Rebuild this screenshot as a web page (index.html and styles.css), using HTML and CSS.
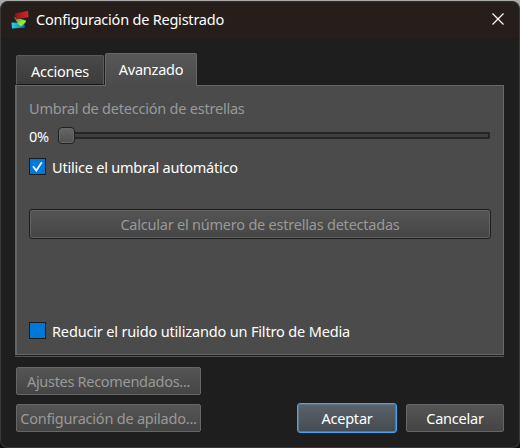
FILE: index.html
```html
<!DOCTYPE html>
<html lang="es">
<head>
<meta charset="utf-8">
<title>Configuración de Registrado</title>
<link rel="stylesheet" href="styles.css">
</head>
<body>
<main class="dialog">
  <header class="titlebar">
    <svg class="logo" width="18" height="20" viewBox="0 0 18 20">
      <defs>
        <linearGradient id="red"><stop offset="0" stop-color="#8c1719"/><stop offset="1" stop-color="#d82629"/></linearGradient>
        <linearGradient id="blue"><stop offset="0" stop-color="#27d5f2"/><stop offset="1" stop-color="#1165b8"/></linearGradient>
        <linearGradient id="green" x2="1" y2="1"><stop offset="0" stop-color="#246e20"/><stop offset=".6" stop-color="#8bea43"/></linearGradient>
      </defs>
      <path d="M.5 12.5 13 13 14 17.5 1 18.5Z" fill="url(#blue)"/>
      <path d="M2.5 6.5 8 8.5 15 10.5 14.5 12.5 10 16.5 7.5 14.5Z" fill="url(#green)"/>
      <path d="M4 3.5 17 .8 17.5 7.3 5 9.3Z" fill="url(#red)"/>
    </svg>
    <h1 class="title">Configuración de Registrado</h1>
    <svg class="close" width="12" height="12" viewBox="0 0 12 12"><path d="M.5.5l11 11M11.5.5l-11 11"/></svg>
  </header>
  <nav class="tabs">
    <div class="tab">Acciones</div>
    <div class="tab active">Avanzado</div>
  </nav>
  <section class="panel">
    <div class="caption">Umbral de detección de estrellas</div>
    <div class="slider-row">
      <span class="value">0%</span>
      <div class="slider"><i class="handle"></i><i class="groove"></i></div>
    </div>
    <div class="check-row">
      <span class="box"><svg width="15" height="15" viewBox="0 0 15 15"><path d="M3 7.2 6.3 11.6 11.8 3.2"/></svg></span>
      <span>Utilice el umbral automático</span>
    </div>
    <div class="button disabled inset">Calcular el número de estrellas detectadas</div>
    <div class="check-row noise">
      <span class="box"></span>
      <span>Reducir el ruido utilizando un Filtro de Media</span>
    </div>
  </section>
  <div class="rule"></div>
  <footer class="footer">
    <div class="button disabled recommended">Ajustes Recomendados...</div>
    <div class="button disabled stacking">Configuración de apilado...</div>
    <div class="button primary">Aceptar</div>
    <div class="button cancel">Cancelar</div>
  </footer>
</main>
</body>
</html>
```
FILE: styles.css
```css
* { box-sizing: border-box; }
body {
  margin: 0;
  width: 520px;
  height: 448px;
  overflow: hidden;
  background: linear-gradient(#aaa 0, #a5a5a5 12px, #30353b 30px, #171717 120px, #111 100%);
  font: 14.5px/20px "Noto Sans", "Open Sans", sans-serif;
  letter-spacing: -0.22px;
  color: #fff;
  white-space: nowrap;
}
.dialog {
  width: 520px;
  height: 447px;
  margin-top: 1px;
  border: 1px solid #393939;
  border-top-color: #33302e;
  border-radius: 8px;
  background: #1e1e1e;
  overflow: hidden;
}
.titlebar {
  display: flex;
  align-items: center;
  height: 36px;
  padding: 0 14px 2px 10px;
  background: #261e1b;
}
.logo { margin-top: 1px; }
.title {
  flex: 1;
  margin: 0 0 0 7px;
  font-size: 14.5px;
  font-weight: 400;
}
.close { margin-right: 1px; fill: none; stroke: #fff; stroke-width: 1.2; }
.tabs {
  display: flex;
  align-items: flex-end;
  gap: 1px;
  height: 47px;
  padding-left: 15px;
}
.tab {
  width: 88px;
  height: 30px;
  padding-top: 5px;
  border: 1px solid #5b5b5b;
  border-bottom: 1px solid #171717;
  border-radius: 2px 2px 0 0;
  background: linear-gradient(#494949, #3c3c3c);
  text-align: center;
}
.tab.active {
  position: relative;
  width: 92px;
  height: 33px;
  margin-bottom: -1px;
  border-color: #686868;
  border-bottom: 0;
  background: linear-gradient(#575757, #4b4b4b);
}
.panel {
  width: 489px;
  height: 270px;
  margin-left: 14px;
  padding: 12px 11px 0 12px;
  border: 1px solid #686868;
  border-left: 2px solid #636363;
  background: #4b4b4b;
}
.caption { color: #999; }
.slider-row { display: flex; height: 20px; margin-top: 8px; }
.value { width: 29px; }
.slider { display: flex; align-items: center; width: 432px; height: 17px; margin-top: 1px; }
.handle {
  width: 17px;
  height: 17px;
  border: 1px solid #202020;
  border-radius: 4px;
  background: linear-gradient(#666, #505050);
  box-shadow: inset 0 0 0 1px #686868;
}
.groove {
  flex: 1;
  height: 7px;
  border: 2px solid #252525;
  border-left: 0;
  border-radius: 0 2px 2px 0;
  background: #3e3e3e;
}
.check-row { display: flex; align-items: center; height: 21px; margin-top: 10px; }
.box {
  width: 17px;
  height: 17px;
  margin-right: 6px;
  border: 1px solid #1b1b1b;
  background: #0078d7;
}
.box svg { display: block; fill: none; stroke: #e4edf7; stroke-width: 1.9; }
.button {
  display: flex;
  align-items: center;
  justify-content: center;
  height: 28px;
  border: 1px solid #666;
  border-radius: 2px;
  background: linear-gradient(#555, #454545);
}
.disabled { color: #999; }
.inset {
  height: 30px;
  width: 462px;
  margin-top: 32px;
  border-color: #1e1e1e;
  border-radius: 3px;
  box-shadow: inset 0 0 0 1px #626262;
}
.noise { margin-top: 81px; letter-spacing: -0.16px; }
.rule { width: 489px; height: 2px; margin-left: 14px; border-bottom: 1px solid #565656; }
.footer {
  display: grid;
  grid-template-columns: 185px 96px 100px 9px 98px;
  grid-template-rows: 28px 30px;
  row-gap: 8px;
  align-items: center;
  padding: 10px 0 0 15px;
}
.recommended { grid-column: 1; grid-row: 1; letter-spacing: -0.3px; }
.stacking { grid-column: 1; grid-row: 2; }
.primary {
  grid-column: 3;
  grid-row: 2;
  height: 30px;
  border-color: #42a5f5;
  border-radius: 3px;
  background: linear-gradient(#5b626a, #454b51);
  box-shadow: inset 0 0 0 1px #5f7588;
}
.cancel { grid-column: 5; grid-row: 2; }
```
